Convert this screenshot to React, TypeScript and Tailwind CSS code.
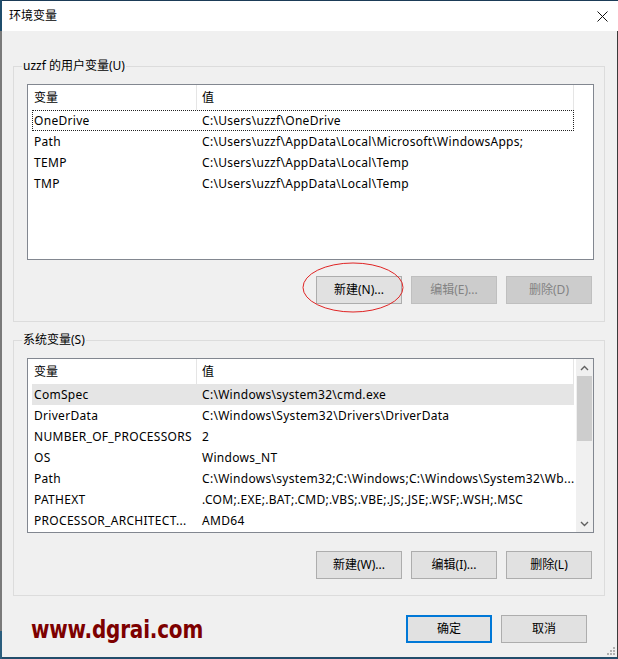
import React from "react";

const userVars = [
  ["OneDrive", "C:\\Users\\uzzf\\OneDrive"],
  ["Path", "C:\\Users\\uzzf\\AppData\\Local\\Microsoft\\WindowsApps;"],
  ["TEMP", "C:\\Users\\uzzf\\AppData\\Local\\Temp"],
  ["TMP", "C:\\Users\\uzzf\\AppData\\Local\\Temp"],
];

const sysVars = [
  ["ComSpec", "C:\\Windows\\system32\\cmd.exe"],
  ["DriverData", "C:\\Windows\\System32\\Drivers\\DriverData"],
  ["NUMBER_OF_PROCESSORS", "2"],
  ["OS", "Windows_NT"],
  ["Path", "C:\\Windows\\system32;C:\\Windows;C:\\Windows\\System32\\Wb..."],
  ["PATHEXT", ".COM;.EXE;.BAT;.CMD;.VBS;.VBE;.JS;.JSE;.WSF;.WSH;.MSC"],
  ["PROCESSOR_ARCHITECT...", "AMD64"],
];

function Btn({ label, disabled, primary }: { label: string; disabled?: boolean; primary?: boolean }) {
  let cls = "bg-[#e1e1e1] border border-[#adadad] text-black";
  if (disabled) cls = "bg-[#cccccc] border border-[#bfbfbf] text-[#838383]";
  if (primary) cls = "bg-[#e1e1e1] border-2 border-[#0078d7] text-black";
  return (
    <button type="button" className={`w-[86px] h-[28px] flex items-center justify-center text-[12px] leading-none ${cls}`}>
      {label}
    </button>
  );
}

function Header() {
  return (
    <div className="flex h-[25px] w-[542px] items-center">
      <div className="w-[165px] h-full border-r border-[#e5e5e5] pl-[2px] flex items-center">变量</div>
      <div className="flex-1 h-full border-r border-[#e5e5e5] pl-[5px] flex items-center">值</div>
    </div>
  );
}

function Row({ name, value, focus, selected }: { name: string; value: string; focus?: boolean; selected?: boolean }) {
  return (
    <div
      className={`flex h-[21px] w-[542px] items-center whitespace-nowrap tracking-[0.3px] ${selected ? "bg-[#e5e5e5]" : ""} ${
        focus ? "outline-1 outline-dotted outline-[#222] -outline-offset-1" : ""
      }`}
    >
      <div className="w-[165px] pl-[2px] overflow-hidden">{name}</div>
      <div className="flex-1 pl-[5px] overflow-hidden">{value}</div>
    </div>
  );
}

function Chevron({ down }: { down?: boolean }) {
  return (
    <svg width="9" height="6" viewBox="0 0 9 6">
      <path d={down ? "M1 1 L4.5 4.5 L8 1" : "M1 5 L4.5 1.5 L8 5"} stroke="#606060" strokeWidth="1.4" fill="none" />
    </svg>
  );
}

export default function App() {
  return (
    <div
      className="w-[618px] h-[659px] flex overflow-hidden text-[12px] text-black"
      style={{ fontFamily: '"Noto Sans", "Noto Sans CJK SC", sans-serif' }}
    >
      {/* left edge of the desktop behind the window */}
      <div className="w-[2px] flex flex-col">
        <div className="h-[31px] bg-[#1f4d6c]"></div>
        <div className="flex-1 bg-[#7a7a7a]"></div>
        <div className="h-[28px] bg-[#2a5d7d]"></div>
      </div>

      <div className="flex-1 flex flex-col relative">
        {/* title bar */}
        <div className="h-[31px] bg-white border-t border-[#1b3b57] flex items-center justify-between pl-[7px] pr-[10px]">
          <span className="text-[12px]">环境变量</span>
          <svg width="11" height="11" viewBox="0 0 11 11">
            <path d="M0.5 0.5 L10.5 10.5 M10.5 0.5 L0.5 10.5" stroke="#111" strokeWidth="1" />
          </svg>
        </div>

        <div className="flex-1 bg-[#f0f0f0] border-r border-[#3b3b3b] border-b-2 border-b-[#234d6b] pl-[11px]">
          {/* user variables */}
          <fieldset className="mt-[27px] w-[592px] border border-[#dcdcdc] p-0">
            <legend className="ml-[8px] px-[1px] leading-[16px]">uzzf 的用户变量(U)</legend>
            <div className="pl-[13px] pr-[10px] pt-[10px] pb-[17px]">
              <div className="h-[176px] border border-[#828790] bg-white pl-[4px]">
                <Header />
                {userVars.map((v, i) => (
                  <Row key={v[0]} name={v[0]} value={v[1]} focus={i === 0} />
                ))}
              </div>
              <div className="mt-[16px] flex justify-end gap-[9px] pr-[2px]">
                <div className="relative">
                  <Btn label="新建(N)..." />
                  <svg className="absolute left-[-14px] top-[-14px] pointer-events-none" width="102" height="51" viewBox="0 0 102 51">
                    <ellipse cx="51" cy="25.5" rx="50" ry="24.5" stroke="#e02424" strokeWidth="1" fill="none" />
                  </svg>
                </div>
                <Btn label="编辑(E)..." disabled />
                <Btn label="删除(D)" disabled />
              </div>
            </div>
          </fieldset>

          {/* system variables */}
          <fieldset className="mt-[10px] w-[592px] border border-[#dcdcdc] p-0">
            <legend className="ml-[8px] px-[1px] leading-[16px]">系统变量(S)</legend>
            <div className="pl-[13px] pr-[10px] pt-[10px] pb-[16px]">
              <div className="h-[175px] border border-[#828790] bg-white flex overflow-hidden">
                <div className="flex-1 pl-[4px] overflow-hidden">
                  <Header />
                  {sysVars.map((v, i) => (
                    <Row key={v[0]} name={v[0]} value={v[1]} selected={i === 0} />
                  ))}
                </div>
                <div className="w-[17px] bg-[#f0f0f0] flex flex-col">
                  <div className="h-[17px] flex items-center justify-center">
                    <Chevron />
                  </div>
                  <div className="h-[65px] mx-[1px] bg-[#cdcdcd]"></div>
                  <div className="flex-1"></div>
                  <div className="h-[17px] flex items-center justify-center">
                    <Chevron down />
                  </div>
                </div>
              </div>
              <div className="mt-[18px] flex justify-end gap-[9px] pr-[2px]">
                <Btn label="新建(W)..." />
                <Btn label="编辑(I)..." />
                <Btn label="删除(L)" />
              </div>
            </div>
          </fieldset>

          {/* bottom */}
          <div className="mt-[18px] w-[592px] flex items-center justify-between pl-[18px] pr-[17px]">
            <span
              className="inline-block scale-y-125 text-[20px] font-bold text-[#7d0000] tracking-[-0.2px]"
              style={{ fontFamily: '"DejaVu Sans", sans-serif' }}
            >
              www.dgrai.com
            </span>
            <div className="flex gap-[8px]">
              <div className="w-[87px]">
                <Btn label="确定" primary />
              </div>
              <div className="w-[87px]">
                <Btn label="取消" />
              </div>
            </div>
          </div>
        </div>

        {/* size grip */}
        <svg className="absolute right-[3px] bottom-[4px]" width="8" height="8" viewBox="0 0 8 8">
          <rect x="6" y="0" width="2" height="2" fill="#b0b0b0" />
          <rect x="3" y="3" width="2" height="2" fill="#b0b0b0" />
          <rect x="6" y="3" width="2" height="2" fill="#b0b0b0" />
          <rect x="0" y="6" width="2" height="2" fill="#b0b0b0" />
          <rect x="3" y="6" width="2" height="2" fill="#b0b0b0" />
          <rect x="6" y="6" width="2" height="2" fill="#b0b0b0" />
        </svg>
      </div>
    </div>
  );
}
